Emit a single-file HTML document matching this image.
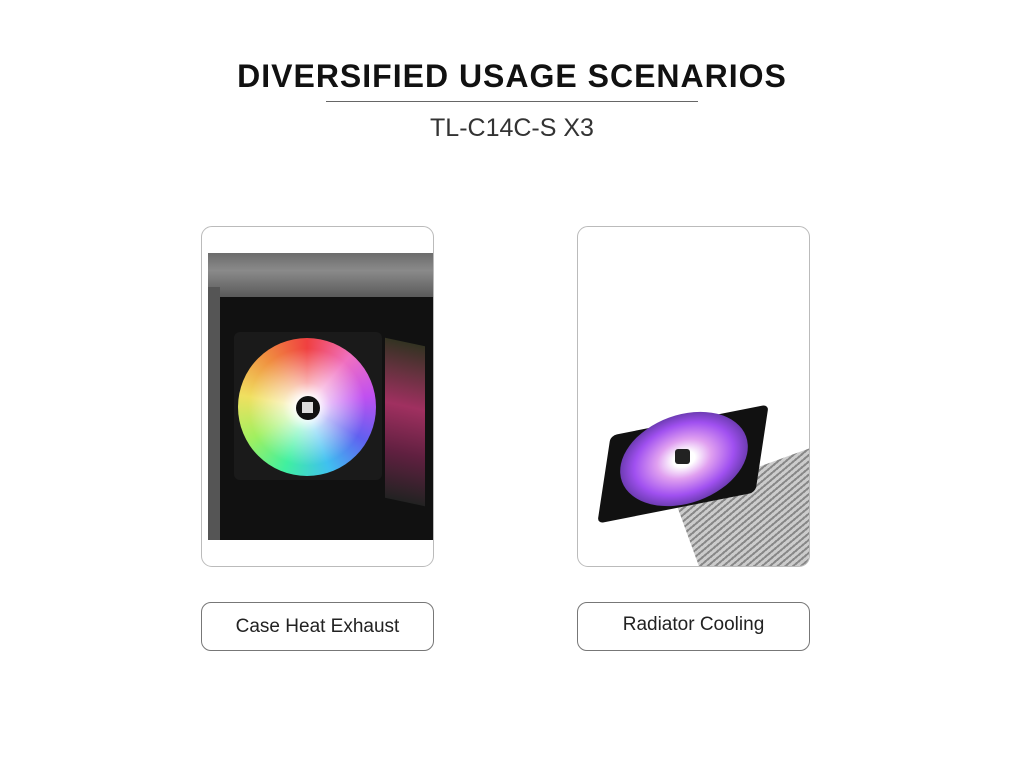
<!DOCTYPE html>
<html><head><style>
body{margin:0;width:1024px;height:768px;background:#fff;position:relative;overflow:hidden;font-family:"Liberation Sans",sans-serif}
.a{position:absolute}
.card{position:absolute;border:1.5px solid #bbb;border-radius:11px;background:#fff;overflow:hidden}
.btn{position:absolute;border:1.5px solid #777;border-radius:10px;background:#fff;text-align:center;font-size:19px;color:#222;line-height:48px}
</style></head><body>
<div class="a" style="left:0;width:1024px;top:58px;text-align:center;font-weight:bold;font-size:32px;letter-spacing:1px;color:#111">DIVERSIFIED USAGE SCENARIOS</div>
<div class="a" style="left:326px;width:372px;top:101px;height:1px;background:#666"></div>
<div class="a" style="left:0;width:1024px;top:114px;text-align:center;font-size:25px;color:#333">TL-C14C-S X3</div>

<div class="card" style="left:201px;top:226px;width:231px;height:339px">
  <div class="a" style="left:6px;top:26px;width:226px;height:287px;background:#111"></div>
  <div class="a" style="left:6px;top:26px;width:226px;height:44px;background:linear-gradient(#6c6c6c,#8a8a8a 40%,#5a5a5a);"></div>
  <div class="a" style="left:6px;top:60px;width:12px;height:253px;background:#555"></div>
  <div class="a" style="left:32px;top:105px;width:148px;height:148px;background:#1a1a1a;border-radius:6px"></div>
  <div class="a" style="left:36px;top:111px;width:138px;height:138px;border-radius:50%;background:conic-gradient(from 0deg,#f04040,#f070c0,#c050f0,#6060f0,#40c0f0,#40f0a0,#a0f060,#f0e060,#f09040,#f04040)"></div>
  <div class="a" style="left:36px;top:111px;width:138px;height:138px;border-radius:50%;background:radial-gradient(circle,#fff 10%,rgba(255,255,255,.6) 25%,rgba(255,255,255,0) 60%)"></div>
  <div class="a" style="left:94px;top:169px;width:24px;height:24px;border-radius:50%;background:#111"></div>
  <div class="a" style="left:100px;top:175px;width:11px;height:11px;background:#ddd"></div>
  <div class="a" style="left:183px;top:115px;width:40px;height:160px;background:linear-gradient(#332,#a03060 40%,#602040 70%,#222);transform:skewY(12deg)"></div>
</div>

<div class="card" style="left:577px;top:226px;width:231px;height:339px">
  <div class="a" style="left:110px;top:240px;width:160px;height:110px;background:repeating-linear-gradient(160deg,#ccc 0 3px,#888 3px 5px);transform:rotate(-20deg)"></div>
  <div class="a" style="left:30px;top:192px;width:150px;height:90px;background:#111;transform:skewX(-20deg) rotate(-12deg);border-radius:6px"></div>
  <div class="a" style="left:40px;top:188px;width:132px;height:88px;border-radius:50%;background:radial-gradient(ellipse,#fff 12%,#e0a0f0 30%,#a050f0 55%,#503090 80%,#111 100%);transform:rotate(-20deg)"></div>
  <div class="a" style="left:97px;top:222px;width:15px;height:15px;background:#222;border-radius:3px"></div>
</div>

<div class="btn" style="left:201px;top:602px;width:231px;height:47px">Case Heat Exhaust</div>
<div class="btn" style="left:577px;top:602px;width:231px;height:47px;line-height:44px">Radiator Cooling</div>
</body></html>
